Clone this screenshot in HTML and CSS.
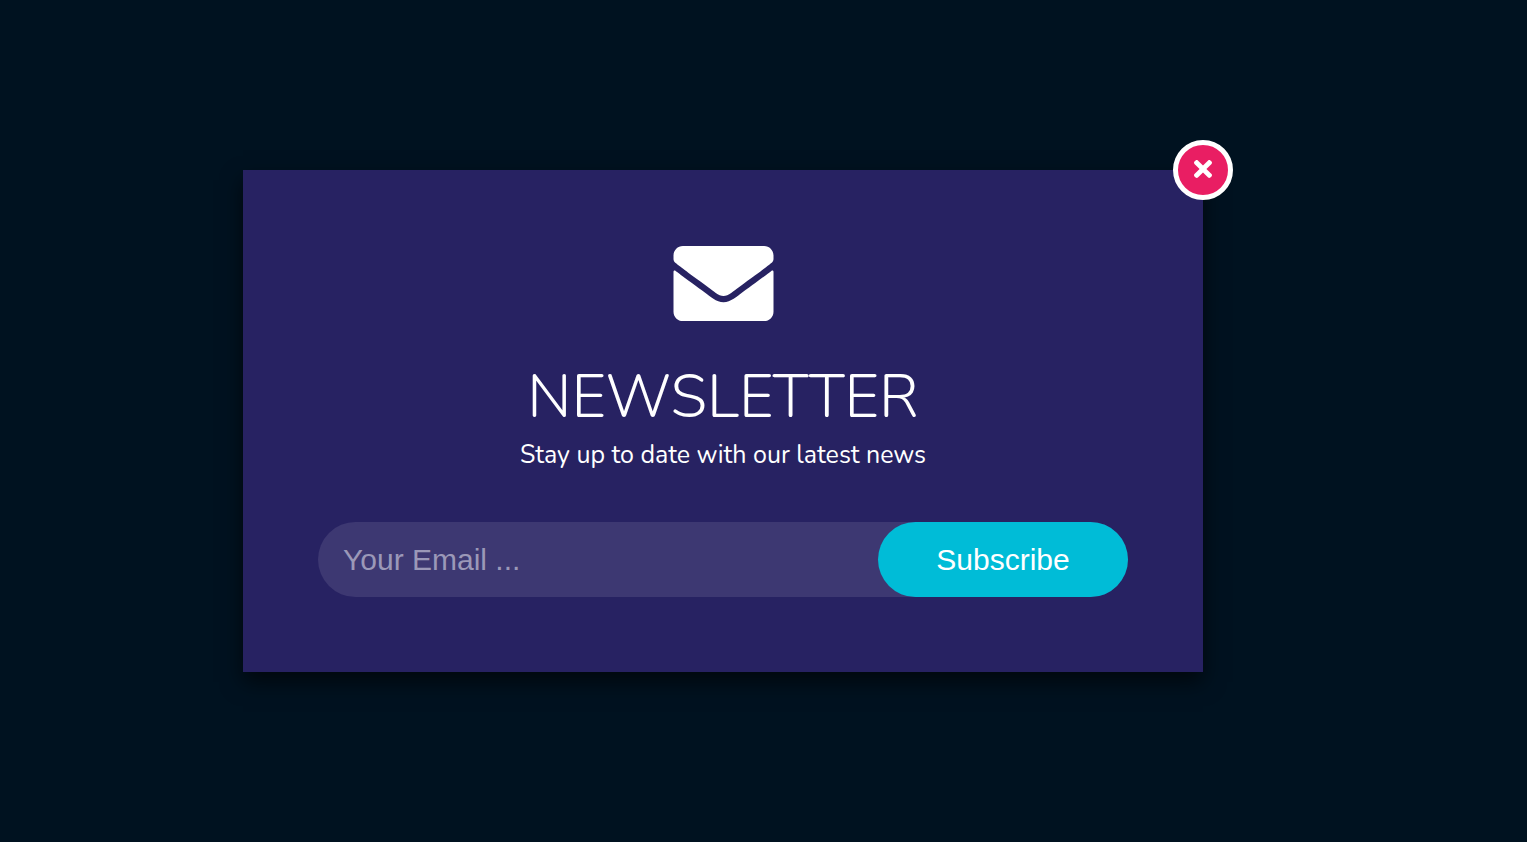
FILE: index.html
```html
<!DOCTYPE html>
<html lang="en">
<head>
  <meta charset="UTF-8">
  <meta name="viewport" content="width=device-width, initial-scale=1.0">
  <title>Newsletter</title>
  <link rel="stylesheet" href="styles.css">
</head>
<body>

<section class="newsletter">
  <button type="button" class="close-btn" aria-label="Close">
    <svg viewBox="0 80 352 352" aria-hidden="true"><path d="M242.72 256l100.07-100.07c12.28-12.28 12.28-32.19 0-44.48l-22.24-22.24c-12.28-12.28-32.19-12.28-44.48 0L176 189.28 75.93 89.21c-12.28-12.28-32.19-12.28-44.48 0L9.21 111.45c-12.28 12.28-12.28 32.19 0 44.48L109.28 256 9.21 356.07c-12.28 12.28-12.28 32.19 0 44.48l22.24 22.24c12.28 12.28 32.2 12.28 44.48 0L176 322.72l100.07 100.07c12.28 12.28 32.2 12.28 44.48 0l22.24-22.24c12.28-12.28 12.28-32.19 0-44.48L242.72 256z"/></svg>
  </button>

  <svg class="mail-icon" viewBox="0 64 512 384" aria-hidden="true"><path d="M502.3 190.8c3.9-3.1 9.7-.2 9.7 4.7V400c0 26.5-21.5 48-48 48H48c-26.5 0-48-21.5-48-48V195.6c0-5 5.7-7.8 9.7-4.7 22.4 17.4 52.1 39.5 154.1 113.6 21.1 15.4 56.7 47.8 92.2 47.6 35.7.3 72-32.8 92.3-47.6 102-74.1 131.6-96.3 154-113.7zM256 320c23.2.4 56.6-29.2 73.4-41.4 132.7-96.3 142.8-104.7 173.4-128.7 5.8-4.5 9.2-11.5 9.2-18.9v-19c0-26.5-21.5-48-48-48H48c-26.5 0-48 21.5-48 48v19c0 7.4 3.4 14.3 9.2 18.9 30.6 23.9 40.7 32.4 173.4 128.7 16.8 12.2 50.2 41.8 73.4 41.4z"/></svg>

  <h1>Newsletter</h1>
  <p>Stay up to date with our latest news</p>

  <form class="subscribe">
    <input type="email" name="email" placeholder="Your Email ..." aria-label="Your Email">
    <button type="submit">Subscribe</button>
  </form>
</section>

</body>
</html>
```
FILE: styles.css
```css
* { box-sizing: border-box; margin: 0; padding: 0; }

body {
  display: flex;
  align-items: center;
  justify-content: center;
  min-height: 100vh;
  padding: 40px 121px 40px 40px;
  background: #001220;
  color: #fff;
  font-family: Nunito, Lato, sans-serif;
}

.newsletter {
  position: relative;
  display: flex;
  flex-direction: column;
  align-items: center;
  width: 100%;
  max-width: 960px;
  padding: 76px 75px 75px;
  background: #272262;
  box-shadow: 0 10px 20px rgba(0, 0, 0, 0.6);
  text-align: center;
}

.close-btn {
  position: absolute;
  top: -30px;
  right: -30px;
  display: flex;
  align-items: center;
  justify-content: center;
  width: 60px;
  height: 60px;
  padding-bottom: 2px;
  border: 5px solid #fff;
  border-radius: 50%;
  background: #e91e63;
  cursor: pointer;
}

.close-btn svg { width: 18px; height: 18px; fill: #fff; }

.mail-icon { width: 101px; height: 75px; fill: #fff; }

h1 {
  margin-top: 36px;
  font-size: 60px;
  font-weight: 300;
  line-height: 80px;
  text-transform: uppercase;
}

p {
  font-size: 25px;
  line-height: 36px;
}

.subscribe {
  display: flex;
  width: 100%;
  height: 75px;
  margin-top: 49px;
  border-radius: 38px;
  background: #3d3872;
}

.subscribe input,
.subscribe button {
  border: none;
  outline: none;
  border-radius: 38px;
  color: #fff;
  font-family: Arial, "Liberation Sans", sans-serif;
  font-size: 30px;
}

.subscribe input {
  flex: 1;
  min-width: 0;
  padding: 0 25px;
  background: transparent;
}

.subscribe input::placeholder { color: #9b98b8; }

.subscribe button {
  width: 250px;
  background: #00bcd7;
  cursor: pointer;
}
```
